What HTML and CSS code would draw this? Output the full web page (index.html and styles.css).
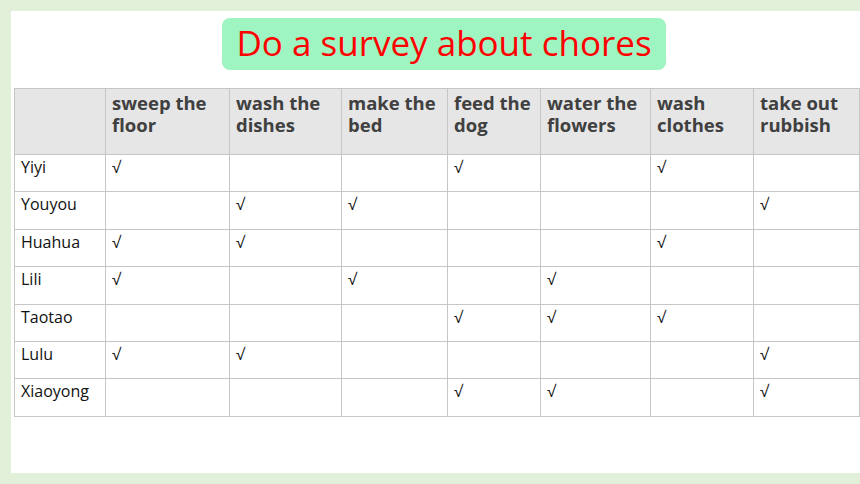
FILE: index.html
```html
<!DOCTYPE html>
<html>
<head>
<meta charset="utf-8">
<link rel="stylesheet" href="styles.css">
</head>
<body>
<div class="panel">
  <div class="title-row"><h1 class="title">Do a survey about chores</h1></div>
  <table class="survey">
    <colgroup>
      <col class="c0"><col class="c1"><col class="c2"><col class="c3"><col class="c4"><col class="c5"><col class="c6"><col class="c7">
    </colgroup>
    <thead>
      <tr><th></th><th>sweep the floor</th><th>wash the dishes</th><th>make the bed</th><th>feed the dog</th><th>water the flowers</th><th>wash clothes</th><th>take out rubbish</th></tr>
    </thead>
    <tbody>
      <tr><td>Yiyi</td><td>√</td><td></td><td></td><td>√</td><td></td><td>√</td><td></td></tr>
      <tr><td>Youyou</td><td></td><td>√</td><td>√</td><td></td><td></td><td></td><td>√</td></tr>
      <tr><td>Huahua</td><td>√</td><td>√</td><td></td><td></td><td></td><td>√</td><td></td></tr>
      <tr><td>Lili</td><td>√</td><td></td><td>√</td><td></td><td>√</td><td></td><td></td></tr>
      <tr><td>Taotao</td><td></td><td></td><td></td><td>√</td><td>√</td><td>√</td><td></td></tr>
      <tr><td>Lulu</td><td>√</td><td>√</td><td></td><td></td><td></td><td></td><td>√</td></tr>
      <tr><td>Xiaoyong</td><td></td><td></td><td></td><td>√</td><td>√</td><td></td><td>√</td></tr>
    </tbody>
  </table>
</div>
</body>
</html>
```
FILE: styles.css
```css
html, body {
  margin: 0;
  padding: 0;
  background: #e2efd9;
  width: 860px;
  height: 484px;
  overflow: hidden;
}
.panel {
  margin: 11px 0 0 11px;
  width: 849px;
  height: 462px;
  background: #ffffff;
  padding-top: 7px;
  box-sizing: border-box;
  font-family: "Open Sans", "Noto Sans", sans-serif;
}
.title-row {
  display: flex;
  padding-left: 211px;
}
.title {
  margin: 0;
  width: 444px;
  height: 52px;
  box-sizing: border-box;
  background: #9ff5c2;
  border-radius: 8px;
  color: #ff0000;
  font-weight: 400;
  font-size: 35px;
  line-height: 49px;
  text-align: center;
}
.survey {
  margin: 18px 0 0 3px;
  width: 845px;
  table-layout: fixed;
  border-collapse: collapse;
}
.c0 { width: 91px; }
.c1 { width: 124px; }
.c2 { width: 112px; }
.c3 { width: 106px; }
.c4 { width: 93px; }
.c5 { width: 110px; }
.c6 { width: 103px; }
.c7 { width: 106px; }
.survey th, .survey td {
  border: 1px solid #c6c6c6;
  text-align: left;
  vertical-align: top;
  padding: 0 6px;
}
.survey th {
  background: #e6e6e6;
  color: #404040;
  font-weight: 700;
  font-size: 18.5px;
  line-height: 22px;
  height: 66px;
  padding-top: 3px;
  box-sizing: border-box;
}
.survey td {
  color: #111111;
  font-size: 16px;
  line-height: 22px;
  height: 37.4px;
  padding-top: 1px;
  box-sizing: border-box;
}
```
